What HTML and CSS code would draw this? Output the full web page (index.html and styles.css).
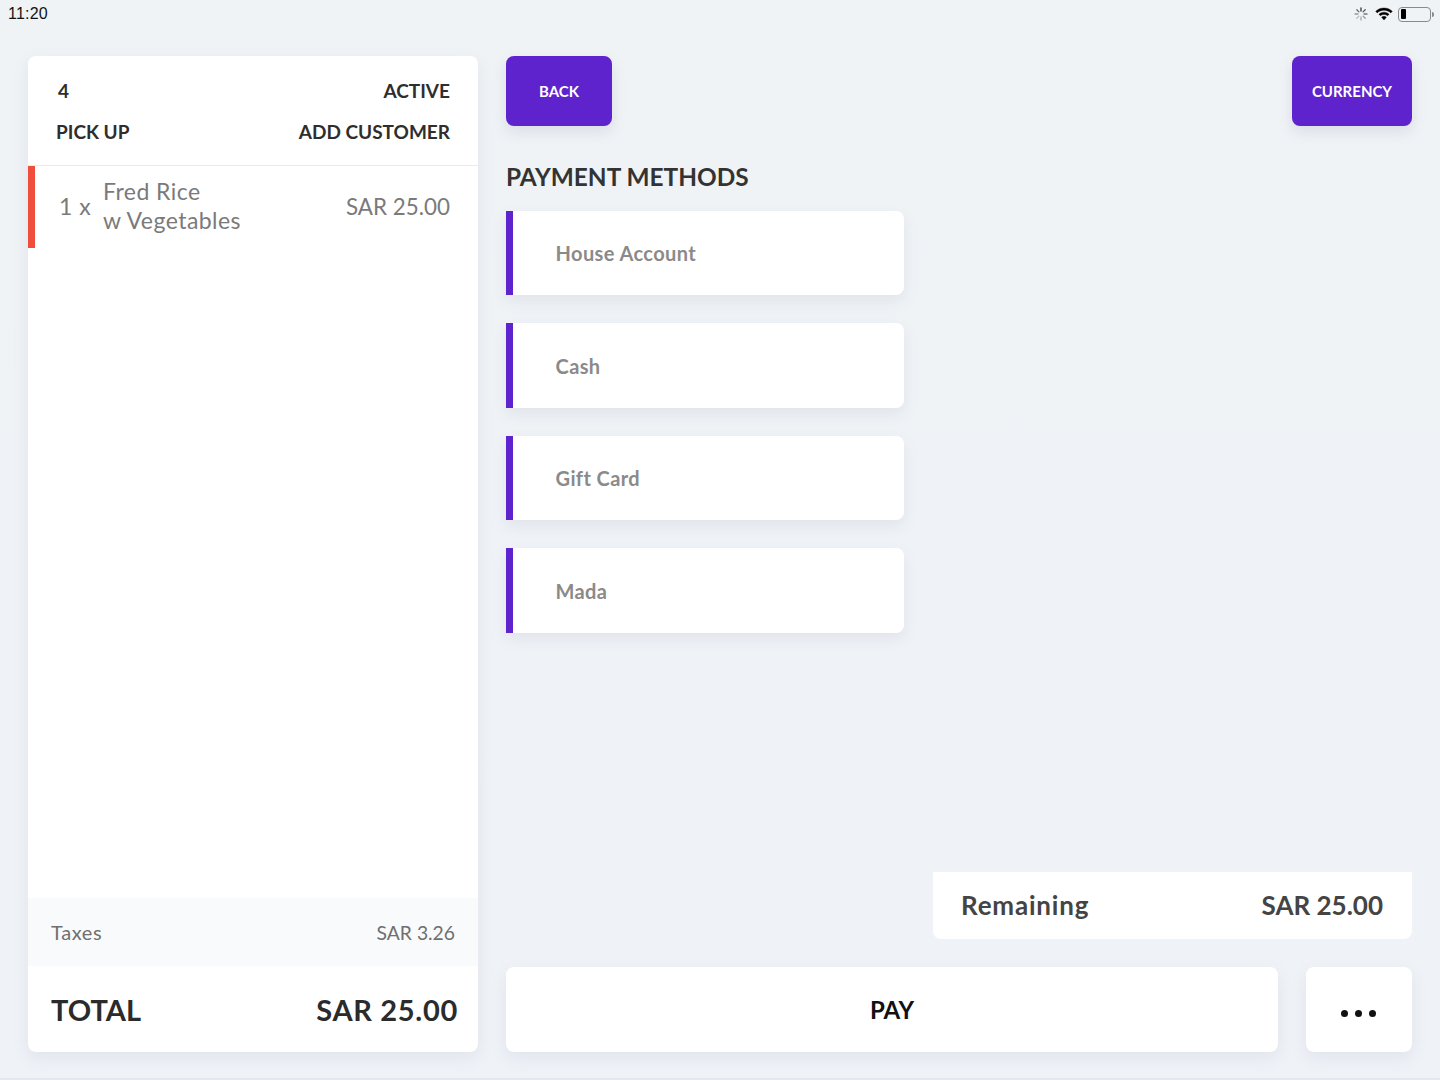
FILE: index.html
```html
<!DOCTYPE html>
<html lang="en">
<head>
<meta charset="utf-8">
<title>Payment</title>
<link rel="stylesheet" href="styles.css">
</head>
<body>
<div class="app">
  <header class="status">
    <span class="time">11:20</span>
    <div class="status-icons">
      <svg class="spin" width="14" height="14" viewBox="0 0 14 14" fill="none" stroke-width="1.3" stroke-linecap="round">
        <path d="M7 1v3" stroke="#333"/><path d="M11.2 2.8 9.1 4.9" stroke="#555"/><path d="M13 7h-3" stroke="#777"/><path d="M11.2 11.2 9.1 9.1" stroke="#999"/>
        <path d="M7 13v-3" stroke="#aaa"/><path d="M2.8 11.2l2.1-2.1" stroke="#bbb"/><path d="M1 7h3" stroke="#999"/><path d="M2.8 2.8l2.1 2.1" stroke="#666"/>
      </svg>
      <svg class="wifi" width="18" height="14" viewBox="0 0 18 14" fill="#000" stroke="#000" stroke-width=".4">
        <path d="M9 1C5.8 1 2.9 2.2.7 4.3l1.5 1.6C4 4.2 6.4 3.2 9 3.2s5 1 6.8 2.7l1.5-1.6C15.1 2.2 12.2 1 9 1z"/>
        <path d="M9 5.2c-2 0-3.8.8-5.1 2l1.5 1.6c.9-.9 2.2-1.4 3.6-1.4s2.7.5 3.6 1.4l1.5-1.6c-1.3-1.2-3.1-2-5.1-2z"/>
        <path d="M9 9.3c-1 0-1.8.4-2.4 1L9 13l2.4-2.7c-.6-.6-1.4-1-2.4-1z"/>
      </svg>
      <div class="battery"><span class="battery-level"></span></div>
      <span class="battery-tip"></span>
    </div>
  </header>
  <main class="layout">
    <section class="ticket">
      <div class="ticket-head">
        <div class="row"><span class="order-no">4</span><span>ACTIVE</span></div>
        <div class="row"><span>PICK UP</span><span>ADD CUSTOMER</span></div>
      </div>
      <div class="item">
        <span class="qty">1 x</span>
        <span class="item-name">Fred Rice<br>w Vegetables</span>
        <span class="item-price">SAR 25.00</span>
      </div>
      <div class="taxes"><span class="taxes-label">Taxes</span><span class="taxes-value">SAR 3.26</span></div>
      <div class="total"><span>TOTAL</span><span class="total-value">SAR 25.00</span></div>
    </section>
    <section class="pay-panel">
      <div class="top-actions">
        <button class="btn btn-back">BACK</button>
        <button class="btn btn-currency">CURRENCY</button>
      </div>
      <h1 class="heading">PAYMENT METHODS</h1>
      <ul class="methods">
        <li class="method">House Account</li>
        <li class="method">Cash</li>
        <li class="method">Gift Card</li>
        <li class="method">Mada</li>
      </ul>
      <div class="remaining"><span class="remaining-label">Remaining</span><span>SAR 25.00</span></div>
      <div class="bottom-actions">
        <button class="pay">PAY</button>
        <button class="more" aria-label="More"><span class="dot"></span><span class="dot"></span><span class="dot"></span></button>
      </div>
    </section>
  </main>
</div>
</body>
</html>
```
FILE: styles.css
```css
* { box-sizing: border-box; }
html, body { margin: 0; height: 100%; }
body {
  font-family: "Lato", "Open Sans", sans-serif;
  background: linear-gradient(180deg, #eff3f5, #eff2f7);
  color: #333;
}
.app { width: 1440px; height: 1080px; display: flex; flex-direction: column; border-bottom: 2px solid #e3e8ee; }
.status {
  height: 28px;
  flex: none;
  display: flex;
  justify-content: space-between;
  align-items: flex-start;
  padding: 4px 6px 0 8px;
}
.time { font: 16px/19px "Liberation Sans", sans-serif; color: #111; letter-spacing: .2px; }
.status-icons { display: flex; align-items: center; height: 20px; }
.spin { margin-right: 7px; }
.wifi { margin-right: 5px; }
.battery {
  width: 33px;
  height: 15px;
  border: 1.5px solid #8a8a8a;
  border-radius: 4px;
  padding: 1.5px 2px;
}
.battery-level { display: block; width: 5px; height: 100%; background: #000; border-radius: 1px; }
.battery-tip { width: 2px; height: 5px; background: #8a8a8a; margin-left: 1px; border-radius: 0 2px 2px 0; }

.layout {
  flex: 1;
  display: grid;
  grid-template-columns: 450px 1fr;
  gap: 28px;
  padding: 28px 28px 26px;
  min-height: 0;
}
.ticket {
  background: #fff;
  border-radius: 8px;
  box-shadow: 0 6px 16px rgba(120, 135, 165, .12);
  display: flex;
  flex-direction: column;
  overflow: hidden;
}
.ticket-head {
  height: 110px;
  flex: none;
  padding: 14px 28px 0;
  border-bottom: 1px solid #e9ebf0;
  font-size: 19px;
  font-weight: 700;
  color: #2e2e2e;
}
.order-no { padding-left: 2px; }
.row { display: flex; justify-content: space-between; height: 41px; align-items: center; }
.item {
  height: 82px;
  flex: none;
  border-left: 7px solid #f04e3c;
  display: flex;
  align-items: center;
  padding: 0 28px 2px 24px;
  color: #7a7a7a;
  font-size: 23px;
  line-height: 29px;
}
.qty { width: 44px; flex: none; word-spacing: 1px; }
.item-name { flex: 1; letter-spacing: .45px; }
.item-price { font-size: 22.4px; }
.taxes {
  margin-top: auto;
  height: 68px;
  flex: none;
  background: #f9fafb;
  display: flex;
  justify-content: space-between;
  align-items: center;
  padding: 0 23px;
  font-size: 20px;
  color: #6f6f6f;
}
.taxes-label { letter-spacing: .6px; }
.taxes-value { font-size: 19.3px; }
.total {
  height: 86px;
  flex: none;
  display: flex;
  justify-content: space-between;
  align-items: center;
  padding: 0 20px 0 23px;
  font-size: 29px;
  font-weight: 700;
  color: #2b2b2b;
}
.total-value { letter-spacing: .7px; }

.pay-panel { display: flex; flex-direction: column; min-width: 0; }
.top-actions { display: flex; justify-content: space-between; flex: none; }
.btn {
  height: 70px;
  border: 0;
  border-radius: 8px;
  background: #5e23cc;
  color: #fff;
  font: 700 15px "Lato", sans-serif;
  box-shadow: 0 6px 14px rgba(110, 120, 160, .16);
}
.btn-back { width: 106px; }
.btn-currency { width: 120px; }
.heading {
  margin: 34px 0 17.75px;
  font-size: 24.4px;
  line-height: 33px;
  font-weight: 700;
  color: #333;
}
.methods { list-style: none; margin: 0; padding: 0; display: flex; flex-direction: column; gap: 28px; }
.method {
  width: 398px;
  height: 84.5px;
  background: #fff;
  border-left: 7px solid #5e23cc;
  border-radius: 0 8px 8px 0;
  display: flex;
  align-items: center;
  padding-left: 42.5px;
  font-size: 20px;
  font-weight: 700;
  letter-spacing: .4px;
  color: #8a8a8a;
  box-shadow: 0 6px 14px rgba(120, 135, 165, .12);
}
.remaining {
  margin-top: auto;
  margin-left: 427px;
  height: 67px;
  flex: none;
  background: #fff;
  border-radius: 0 0 8px 8px;
  display: flex;
  justify-content: space-between;
  align-items: center;
  padding: 0 29px 2px 28px;
  font-size: 26px;
  font-weight: 700;
  color: #444;
}
.remaining-label { letter-spacing: .8px; }
.bottom-actions { display: flex; gap: 28px; margin-top: 28px; flex: none; }
.pay, .more {
  height: 85px;
  border: 0;
  background: #fff;
  border-radius: 8px;
  box-shadow: 0 6px 16px rgba(120, 135, 165, .12);
}
.pay { flex: 1; font: 700 24px "Lato", sans-serif; color: #111; }
.more { width: 106px; display: flex; justify-content: center; align-items: center; gap: 7px; padding: 8px 2px 0 0; }
.dot { width: 7px; height: 7px; border-radius: 50%; background: #111; }
```
